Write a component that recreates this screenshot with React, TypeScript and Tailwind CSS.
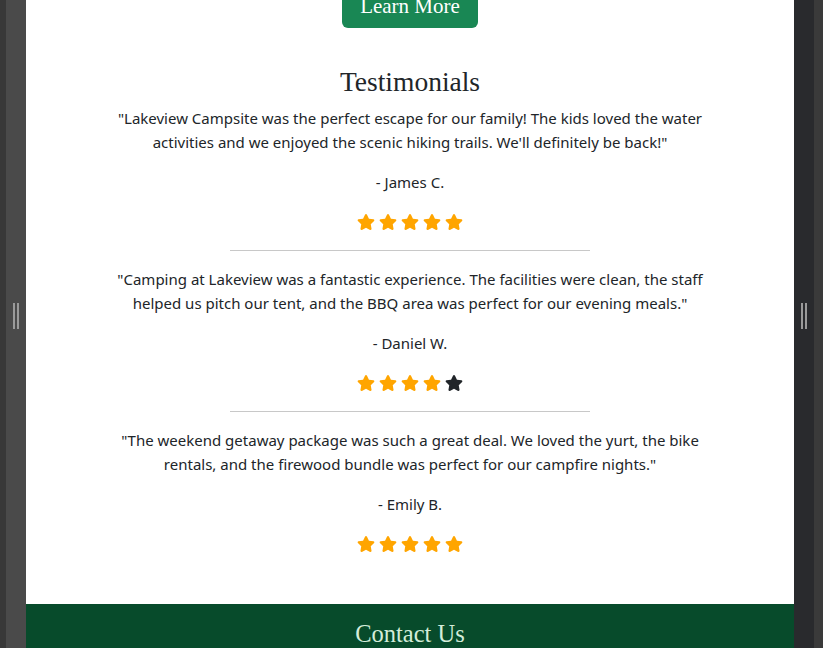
import React from "react";
import { FaStar } from "react-icons/fa";

const testimonials = [
  {
    text: "\"Lakeview Campsite was the perfect escape for our family! The kids loved the water activities and we enjoyed the scenic hiking trails. We'll definitely be back!\"",
    author: "- James C.",
    rating: 5,
  },
  {
    text: "\"Camping at Lakeview was a fantastic experience. The facilities were clean, the staff helped us pitch our tent, and the BBQ area was perfect for our evening meals.\"",
    author: "- Daniel W.",
    rating: 4,
  },
  {
    text: "\"The weekend getaway package was such a great deal. We loved the yurt, the bike rentals, and the firewood bundle was perfect for our campfire nights.\"",
    author: "- Emily B.",
    rating: 5,
  },
];

function Handle() {
  return (
    <div className="flex gap-[2px]">
      <div className="w-[2px] h-[26px] bg-[#9a9a9a]" />
      <div className="w-[2px] h-[26px] bg-[#9a9a9a]" />
    </div>
  );
}

function Stars({ n }: { n: number }) {
  return (
    <div className="flex justify-center items-center gap-[4px] h-[24px]">
      {[0, 1, 2, 3, 4].map((i) => (
        <FaStar key={i} size={18} className={i < n ? "text-[#ffa500]" : "text-[#212529]"} />
      ))}
    </div>
  );
}

export default function App() {
  return (
    <div className="flex h-[648px] w-[823px] overflow-hidden bg-white">
      <div className="flex shrink-0">
        <div className="w-[6px] bg-[#383838]" />
        <div className="relative w-[20px] bg-[#4a4a4a]">
          <div className="absolute left-[7px] top-[303px]">
            <Handle />
          </div>
        </div>
      </div>

      <div className="flex-1 flex flex-col bg-white">
        <div className="flex flex-col items-center -mt-[16px]">
          <button className="h-[44px] w-[136px] rounded-[6px] bg-[#198754] text-white text-[21px] leading-[30px] py-[7px]" style={{ fontFamily: '"Liberation Serif", serif' }}>
            Learn More
          </button>
        </div>

        <section className="flex flex-col items-center pt-[38px] pb-[48px]">
          <h2
            className="text-[27.5px] leading-[32px] mb-[8px] text-[#212529]"
            style={{ fontFamily: '"Liberation Serif", serif' }}
          >
            Testimonials
          </h2>
          <div className="w-[600px] flex flex-col items-center text-[#212529]" style={{ fontFamily: '"Noto Sans", sans-serif' }}>
            {testimonials.map((t, idx) => (
              <div key={idx} className="w-full flex flex-col items-center">
                <p className="text-[15px] leading-[24px] text-center">{t.text}</p>
                <p className="text-[15px] leading-[24px] text-center mt-[16px]">{t.author}</p>
                <div className="mt-[16px]">
                  <Stars n={t.rating} />
                </div>
                {idx < testimonials.length - 1 && (
                  <div className="w-[360px] h-px bg-[#c8c8c8] mt-[16px] mb-[16px]" />
                )}
              </div>
            ))}
          </div>
        </section>

        <footer className="flex-1 bg-[#074b2b] flex justify-center pt-[15px]">
          <h2 className="text-[24.5px] leading-[29px] text-[#d4edda]" style={{ fontFamily: '"Liberation Serif", serif' }}>
            Contact Us
          </h2>
        </footer>
      </div>

      <div className="flex shrink-0">
        <div className="relative w-[20px] bg-[#292a2d]">
          <div className="absolute left-[7px] top-[303px]">
            <Handle />
          </div>
        </div>
        <div className="w-[9px] bg-[#3a3a3a]" />
      </div>
    </div>
  );
}
